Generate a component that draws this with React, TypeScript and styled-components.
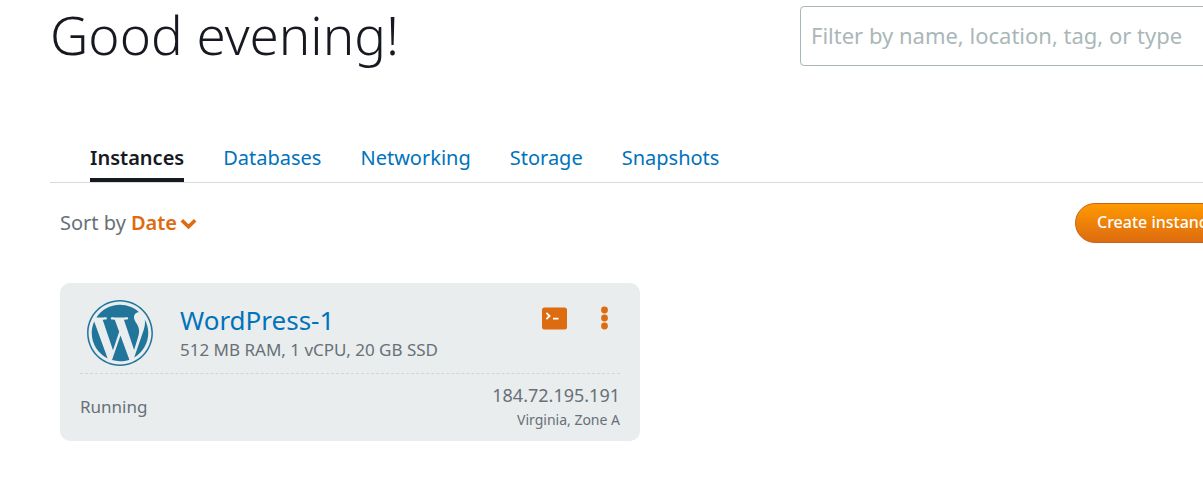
import React from "react";
import styled, { createGlobalStyle } from "styled-components";
import { FaWordpress } from "react-icons/fa";

const GlobalStyle = createGlobalStyle`
  *, *::before, *::after { box-sizing: border-box; }
  body {
    margin: 0;
    background: #fff;
    color: #16191f;
    font-family: "Noto Sans", "Open Sans", sans-serif;
  }
  button, input { font-family: inherit; }
`;

const Viewport = styled.div`
  overflow-x: clip;
`;

const Page = styled.main`
  width: calc(100% + 40px);
  padding: 6px 0 40px 50px;
`;

const Header = styled.header`
  display: flex;
  align-items: flex-start;
  justify-content: space-between;
  padding-right: 3px;
`;

const Greeting = styled.h1`
  margin: 0;
  font-size: 53px;
  font-weight: 300;
  line-height: 58px;
  white-space: nowrap;
`;

const FilterInput = styled.input`
  width: 440px;
  height: 60px;
  padding: 0 10px 2px;
  border: 1px solid #aab7b8;
  border-radius: 4px;
  background: #fff;
  color: #16191f;
  font-size: 22px;
  &::placeholder {
    color: #aab7b8;
    opacity: 1;
  }
`;

const Tabs = styled.nav`
  display: flex;
  gap: 39px;
  margin-top: 70px;
  padding-left: 40px;
  border-bottom: 1px solid #d5dbdb;
`;

const Tab = styled.a<{ $active?: boolean }>`
  height: 46px;
  border-bottom: 4px solid ${(p) => (p.$active ? "#16191f" : "transparent")};
  color: ${(p) => (p.$active ? "#16191f" : "#0073bb")};
  font-size: 20px;
  font-weight: ${(p) => (p.$active ? 600 : 400)};
  line-height: 44px;
  text-decoration: none;
`;

const Toolbar = styled.div`
  display: flex;
  align-items: center;
  justify-content: space-between;
  margin-top: 20px;
  padding-left: 10px;
`;

const Sort = styled.div`
  display: flex;
  align-items: center;
  gap: 5px;
  padding-bottom: 2px;
  color: #687078;
  font-size: 20px;
`;

const SortButton = styled.button`
  display: flex;
  align-items: center;
  gap: 3px;
  padding: 0;
  border: 0;
  background: none;
  color: #dd6b10;
  font-size: 20px;
  font-weight: 600;
  cursor: pointer;
  svg { margin-top: 3px; }
`;

const CreateButton = styled.button`
  height: 40px;
  width: 168px;
  padding: 0 21px 3px;
  border: 1px solid #c7641c;
  border-radius: 20px;
  background: linear-gradient(#ff9900, #dd6b10);
  color: #fff;
  font-size: 16px;
  font-weight: 500;
  text-align: left;
  white-space: nowrap;
  cursor: pointer;
`;

const Card = styled.article`
  width: 580px;
  margin: 40px 0 0 10px;
  padding: 0 20px;
  border-radius: 10px;
  background: #e9eded;
  color: #687078;
`;

const CardTop = styled.div`
  display: flex;
  align-items: flex-start;
  height: 91px;
  padding: 16px 11px 0 6px;
  border-bottom: 1px dashed #d0d6d6;
`;

const Logo = styled(FaWordpress)`
  flex: none;
  width: 68px;
  height: 68px;
  color: #21759b;
`;

const Summary = styled.div`
  flex: 1;
  margin-left: 26px;
  padding-top: 1px;
`;

const InstanceName = styled.a`
  display: block;
  color: #0073bb;
  font-size: 26px;
  line-height: 40px;
  text-decoration: none;
`;

const Specs = styled.p`
  margin: 0;
  font-size: 17px;
  line-height: 20px;
`;

const Actions = styled.div`
  display: flex;
  gap: 33px;
  padding-top: 7px;
`;

const IconButton = styled.button`
  display: block;
  padding: 0;
  border: 0;
  background: none;
  color: #dd6b10;
  cursor: pointer;
  svg { display: block; }
`;

const CardBottom = styled.div`
  display: flex;
  align-items: center;
  justify-content: space-between;
  height: 67px;
  padding-bottom: 2px;
  font-size: 17px;
`;

const Place = styled.div`
  text-align: right;
`;

const Address = styled.div`
  font-size: 18px;
  line-height: 26px;
`;

const Zone = styled.div`
  font-size: 14px;
  line-height: 24px;
`;

const tabs = ["Instances", "Databases", "Networking", "Storage", "Snapshots"];

export default function App() {
  return (
    <Viewport>
      <GlobalStyle />
      <Page>
        <Header>
          <Greeting>Good evening!</Greeting>
          <FilterInput
            type="text"
            aria-label="Filter instances"
            placeholder="Filter by name, location, tag, or type"
          />
        </Header>
        <Tabs aria-label="Resources">
          {tabs.map((name, i) => (
            <Tab key={name} href={`#${name.toLowerCase()}`} $active={i === 0}>
              {name}
            </Tab>
          ))}
        </Tabs>
        <Toolbar>
          <Sort>
            <span>Sort by</span>
            <SortButton type="button">
              Date
              <svg width="17" height="12" viewBox="0 0 17 12" aria-hidden="true">
                <path d="M1.8 2.2l6.7 6.6 6.7-6.6" fill="none" stroke="currentColor" strokeWidth="3.6" />
              </svg>
            </SortButton>
          </Sort>
          <CreateButton type="button">Create instance</CreateButton>
        </Toolbar>
        <Card>
          <CardTop>
            <Logo aria-hidden="true" />
            <Summary>
              <InstanceName href="#wordpress-1">WordPress-1</InstanceName>
              <Specs>512 MB RAM, 1 vCPU, 20 GB SSD</Specs>
            </Summary>
            <Actions>
              <IconButton type="button" aria-label="Connect">
                <svg width="26" height="23" viewBox="0 0 26 23">
                  <rect x="0" y="0.5" width="25" height="22" rx="2.5" fill="currentColor" />
                  <path d="M4.4 5.8l3.2 3.2-3.2 3.2M11 11.7h5.5" fill="none" stroke="#fff" strokeWidth="1.8" />
                </svg>
              </IconButton>
              <IconButton type="button" aria-label="More actions">
                <svg width="8" height="24" viewBox="0 0 8 24" fill="currentColor">
                  <circle cx="3.5" cy="4" r="3.4" />
                  <circle cx="3.5" cy="12" r="3.4" />
                  <circle cx="3.5" cy="20" r="3.4" />
                </svg>
              </IconButton>
            </Actions>
          </CardTop>
          <CardBottom>
            <span>Running</span>
            <Place>
              <Address>184.72.195.191</Address>
              <Zone>Virginia, Zone A</Zone>
            </Place>
          </CardBottom>
        </Card>
      </Page>
    </Viewport>
  );
}
